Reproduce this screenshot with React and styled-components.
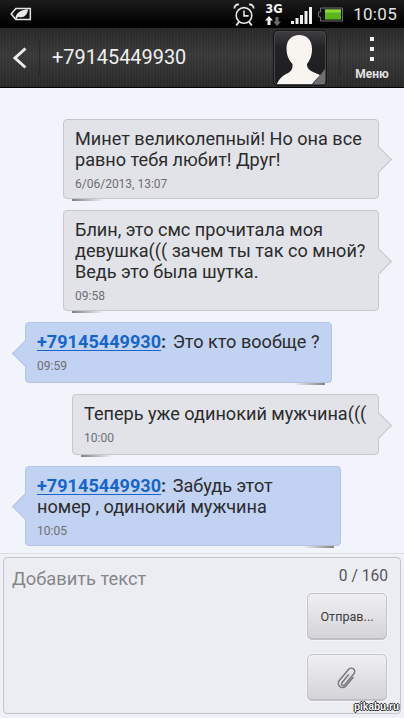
import React from 'react';
import styled, { createGlobalStyle } from 'styled-components';

const GlobalStyle = createGlobalStyle`
  html, body {
    margin: 0;
    padding: 0;
    background: #f2f4fb;
  }
  * {
    box-sizing: border-box;
  }
`;

const Screen = styled.div`
  width: 404px;
  height: 718px;
  position: relative;
  overflow: hidden;
  display: flex;
  flex-direction: column;
  background: #f2f4fb;
  font-family: Roboto, "Liberation Sans", sans-serif;
`;

const StatusBar = styled.div`
  height: 28px;
  flex: none;
  display: flex;
  align-items: center;
  padding: 0 7px 0 10px;
  background: linear-gradient(#1c1c1c, #000 85%);
  color: #e8e8e8;
`;

const StatusRight = styled.div`
  margin-left: auto;
  display: flex;
  align-items: center;
`;

const Clock = styled.span`
  font-size: 17px;
  margin-left: 10px;
  letter-spacing: 0.3px;
  color: #e4e4e4;
`;

const NetBlock = styled.div`
  width: 17px;
  margin: 0 9px 0 10px;
  display: flex;
  flex-direction: column;
  align-items: flex-start;
`;

const NetLabel = styled.span`
  font-family: "DejaVu Sans", sans-serif;
  font-size: 11.5px;
  font-weight: 700;
  line-height: 13px;
  color: #f2f2f2;
`;

const Header = styled.div`
  height: 60px;
  flex: none;
  display: flex;
  align-items: center;
  border-bottom: 1px solid #000;
  background:
    repeating-linear-gradient(90deg, rgba(255,255,255,0.025) 0 1px, rgba(0,0,0,0.04) 1px 3px),
    linear-gradient(#2a2a2a, #3a3a3a 45%, #2b2b2b);
`;

const BackBox = styled.div`
  width: 40px;
  height: 36px;
  display: flex;
  align-items: center;
  justify-content: center;
  border-right: 1px solid #2a2a2a;
`;

const Title = styled.div`
  margin-left: 12px;
  flex: 1;
  font-size: 19.9px;
  color: #efefef;
`;

const Avatar = styled.div`
  width: 54px;
  height: 56px;
  margin: 1px 12px 0 0;
  border-radius: 5px;
  overflow: hidden;
  background: linear-gradient(#3e3e42, #232326 30%, #1d1d20);
  border: 1px solid #161616;
  box-shadow: inset 0 0 0 1px #47474b;
  svg {
    display: block;
  }
`;

const MenuBox = styled.div`
  width: 65px;
  height: 36px;
  border-left: 1px solid #2a2a2a;
  display: flex;
  flex-direction: column;
  align-items: center;
`;

const MenuDots = styled.div`
  display: flex;
  flex-direction: column;
  gap: 6px;
  margin-top: -3px;
  i {
    display: block;
    width: 4px;
    height: 4px;
    background: #f0f0f0;
  }
`;

const MenuLabel = styled.span`
  font-size: 12px;
  font-weight: 700;
  margin-top: 6px;
  color: #e2e2e2;
`;

const Thread = styled.div`
  flex: 1;
  min-height: 0;
  display: flex;
  flex-direction: column;
  padding-top: 31px;
`;

const Bubble = styled.div`
  position: relative;
  flex: none;
  align-self: ${(p) => (p.$mine ? 'flex-end' : 'flex-start')};
  width: ${(p) => p.$width}px;
  min-height: 61px;
  margin: ${(p) => (p.$mine ? '0 25px 11px 0' : '0 0 11px 25px')};
  padding: 8px 11px 7px;
  border: 1px solid ${(p) => (p.$mine ? '#c6c7cd' : '#b6c2de')};
  border-radius: 4px;
  background: ${(p) => (p.$mine ? '#e2e3e8' : '#c2d2f3')};

  &::before {
    content: '';
    position: absolute;
    top: 50%;
    ${(p) => (p.$mine ? 'right: -10px;' : 'left: -10px;')}
    width: 18px;
    height: 18px;
    margin-top: -9px;
    transform: rotate(45deg);
    background: inherit;
    border-style: solid;
    border-color: ${(p) => (p.$mine ? '#c6c7cd' : '#b6c2de')};
    border-width: ${(p) => (p.$mine ? '1px 1px 0 0' : '0 0 1px 1px')};
  }

  &::after {
    content: '';
    position: absolute;
    bottom: -3px;
    ${(p) => (p.$mine ? 'left: 8px;' : 'right: 6px;')}
    width: 32px;
    height: 2px;
    background: linear-gradient(${(p) => (p.$mine ? '90deg' : '270deg')}, #808080, rgba(128,128,128,0));
  }
`;

const Text = styled.div`
  position: relative;
  z-index: 1;
  font-size: 18.1px;
  line-height: 21px;
  white-space: pre-line;
  color: #2b2b2b;
`;

const Sender = styled.span`
  font-weight: 700;
  color: #1665c8;
  text-decoration: underline;
  text-underline-offset: 2px;
`;

const Colon = styled.b`
  margin-right: 2px;
`;

const Time = styled.div`
  position: relative;
  z-index: 1;
  font-size: 12px;
  line-height: 13px;
  margin-top: 8px;
  color: #6e6e72;
`;

const Composer = styled.div`
  height: 165px;
  flex: none;
  padding: 3px 3px 4px;
  border-top: 1px solid #dcdde2;
  background: #f0f1f6;
`;

const InputBox = styled.div`
  height: 100%;
  display: flex;
  justify-content: space-between;
  padding: 13px 13px 0 8px;
  border: 1px solid #c4c5ca;
  border-radius: 4px;
  background: #ecedf2;
`;

const Placeholder = styled.span`
  font-size: 18.3px;
  line-height: 18px;
  margin-top: -1px;
  color: #85868a;
`;

const Side = styled.div`
  display: flex;
  flex-direction: column;
  align-items: flex-end;
`;

const Counter = styled.span`
  font-size: 15.6px;
  line-height: 15px;
  margin-top: -2px;
  margin-right: -1px;
  color: #55565a;
`;

const ActionButton = styled.div`
  width: 80px;
  height: 47px;
  margin-top: ${(p) => p.$top}px;
  display: flex;
  align-items: center;
  justify-content: center;
  border: 1px solid #c2c3c8;
  border-radius: 5px;
  font-size: 12.6px;
  color: #3c3c40;
  background: linear-gradient(#f0f0f3, #d3d3d8);
  box-shadow: 0 0 0 1px #f6f6f9, inset 0 -1px 0 #bdbdc2;
`;

const Watermark = styled.span`
  position: absolute;
  right: 5px;
  bottom: 6px;
  font-family: "Liberation Sans", sans-serif;
  font-size: 10px;
  font-weight: 700;
  color: #fff;
  text-shadow: 1px 0 0 #222, -1px 0 0 #222, 0 1px 0 #222, 0 -1px 0 #222;
`;

const SignalWrap = styled.div`
  display: flex;
  margin-top: 3px;
`;

const LeafIcon = () => (
  <svg width="22" height="14" viewBox="0 0 23 15" fill="none">
    <path d="M6 1.500H21.500V13.500H6L1 7.500Z" fill="#111" stroke="#e4e4e4" strokeWidth="1.6" />
    <path d="M5.500 11.500C7 5.500 12 3 19 2.500C18.500 9 14 12.500 8.500 10.500L6.500 13Z" fill="#e8e8e8" />
  </svg>
);

const AlarmIcon = () => (
  <svg width="22" height="25" viewBox="0 0 24 26" fill="none" stroke="#e6e6e6">
    <circle cx="12" cy="14" r="8.500" strokeWidth="1.700" />
    <path d="M12 8.500V14.500H17" strokeWidth="1.700" />
    <path d="M1.500 6.500C1.500 3.500 4 1.500 6.500 2.200M22.500 6.500C22.500 3.500 20 1.500 17.500 2.200" strokeWidth="2" />
    <path d="M6.500 21L3.500 25M17.500 21L20.500 25" strokeWidth="2" />
  </svg>
);

const ArrowsIcon = () => (
  <svg width="17" height="10" viewBox="0 0 17 10">
    <path d="M0 4.500L4 0L8 4.500H5.500V9H2.500V4.500Z" fill="#f2f2f2" />
    <path d="M10.500 1H13.500V5.500H16L12 10L8.500 5.500H10.500Z" fill="#6d6d6d" />
  </svg>
);

const SignalIcon = () => (
  <svg width="21" height="17" viewBox="0 0 21 17" fill="#f0f0f0">
    <rect x="0" y="14" width="3" height="3" />
    <rect x="4.500" y="11" width="3" height="6" />
    <rect x="9" y="8" width="3" height="9" />
    <rect x="13.500" y="4" width="3" height="13" />
    <rect x="18" y="0" width="3" height="17" />
  </svg>
);

const BatteryIcon = () => (
  <svg width="25" height="15" viewBox="0 0 25 15" fill="none" style={{ marginLeft: 6 }}>
    <path d="M0.500 5H2.500V1H24.500V14H2.500V10H0.500Z" stroke="#6f6f6f" fill="#111" />
    <rect x="7" y="2.500" width="16" height="10" fill="#5cb51b" />
    <rect x="7" y="2.500" width="16" height="3" fill="#8ed83e" />
  </svg>
);

const BackIcon = () => (
  <svg width="16" height="24" viewBox="0 0 16 24" fill="none">
    <path d="M13.500 2.500L3 12L13.500 21.500" stroke="#ececec" strokeWidth="3" />
  </svg>
);

const PersonIcon = () => (
  <svg width="52" height="54" viewBox="0 0 52 54">
    <path
      d="M25 4C33 4 38 9 38 18C38 25 36 29 33 33C33 37 35 39 39 41L46 44L38 53H3C5 48 8 45 12 43C17 41 19 38 18.500 33C15 29 12.500 25 12.500 17C12.500 9 18 4 25 4Z"
      fill="#f8f4ef"
    />
    <path d="M51 38V53H39Z" fill="#6f6f72" />
  </svg>
);

const ClipIcon = () => (
  <svg width="24" height="24" viewBox="-2 -1 28 28" fill="none" stroke="#77777b" strokeWidth="1.700" strokeLinecap="round">
    <path
      transform="rotate(40 12 13)"
      d="M11 9V21A2 2 0 0 0 15 21V4A4 4 0 0 0 7 4V21A5 5 0 0 0 17 21V8"
    />
  </svg>
);

const messages = [
  { mine: true, width: 316, text: 'Минет великолепный! Но она все равно тебя любит! Друг!', time: '6/06/2013, 13:07' },
  { mine: true, width: 316, text: 'Блин, это смс прочитала моя девушка((( зачем ты так со мной? Ведь это была шутка.', time: '09:58' },
  { mine: false, width: 307, sender: '+79145449930', text: 'Это кто вообще ?', time: '09:59' },
  { mine: true, width: 307, text: 'Теперь уже одинокий мужчина(((', time: '10:00' },
  { mine: false, width: 316, sender: '+79145449930', text: 'Забудь этот\nномер , одинокий мужчина', time: '10:05' },
];

export default function App() {
  return (
    <Screen>
      <GlobalStyle />
      <StatusBar>
        <LeafIcon />
        <StatusRight>
          <AlarmIcon />
          <NetBlock>
            <NetLabel>3G</NetLabel>
            <ArrowsIcon />
          </NetBlock>
          <SignalWrap>
            <SignalIcon />
          </SignalWrap>
          <BatteryIcon />
          <Clock>10:05</Clock>
        </StatusRight>
      </StatusBar>
      <Header>
        <BackBox>
          <BackIcon />
        </BackBox>
        <Title>+79145449930</Title>
        <Avatar>
          <PersonIcon />
        </Avatar>
        <MenuBox>
          <MenuDots>
            <i />
            <i />
            <i />
          </MenuDots>
          <MenuLabel>Меню</MenuLabel>
        </MenuBox>
      </Header>
      <Thread>
        {messages.map((m) => (
          <Bubble key={m.time} $mine={m.mine} $width={m.width}>
            <Text>
              {m.sender && (
                <>
                  <Sender>{m.sender}</Sender>
                  <Colon>:</Colon>{' '}
                </>
              )}
              {m.text}
            </Text>
            <Time>{m.time}</Time>
          </Bubble>
        ))}
      </Thread>
      <Composer>
        <InputBox>
          <Placeholder>Добавить текст</Placeholder>
          <Side>
            <Counter>0 / 160</Counter>
            <ActionButton $top={9}>Отправ...</ActionButton>
            <ActionButton $top={14}>
              <ClipIcon />
            </ActionButton>
          </Side>
        </InputBox>
      </Composer>
      <Watermark>pikabu.ru</Watermark>
    </Screen>
  );
}
